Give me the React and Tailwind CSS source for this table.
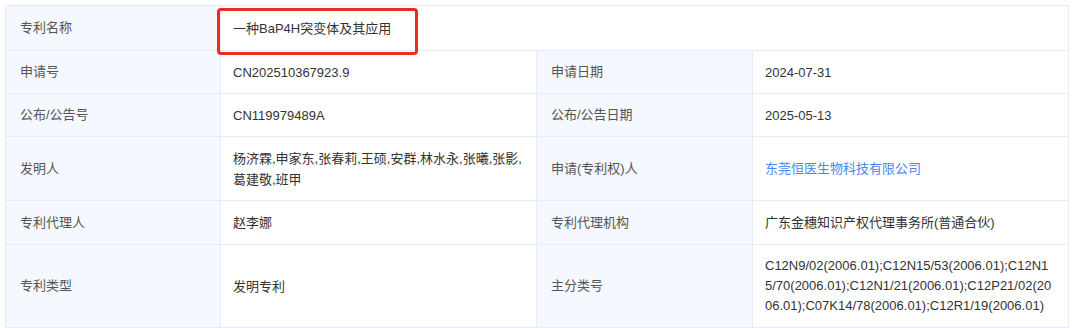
import React from 'react';

const font = { fontFamily: '"Liberation Sans", Arial, "Noto Sans CJK SC", sans-serif' };

function Label({ children }) {
  return (
    <td className="border border-[#e6ebf5] bg-[#f5f8fe] pl-[14px] text-[13px] text-[#555]">
      {children}
    </td>
  );
}

function Value({ children, colSpan, className = '' }) {
  return (
    <td colSpan={colSpan} className={`border border-[#e6ebf5] bg-white pl-[12px] pr-[8px] text-[13px] leading-[21px] text-[#333] ${className}`}>
      {children}
    </td>
  );
}

export default function App() {
  return (
    <div className="min-h-[328px] bg-white pl-[5px] pt-[5px]" style={font}>
      <table className="w-[1063px] table-fixed border-collapse">
        <colgroup>
          <col className="w-[215px]" />
          <col className="w-[316px]" />
          <col className="w-[216px]" />
          <col className="w-[316px]" />
        </colgroup>
        <tbody>
          <tr className="h-[45px]">
            <Label>专利名称</Label>
            <Value colSpan={3} className="relative">
              一种BaP4H突变体及其应用
              {/* 标注框 */}
              <div className="pointer-events-none absolute left-[-4px] top-[2px] h-[47px] w-[201px] rounded-[4px] border-[3px] border-[#ee2a24]" />
            </Value>
          </tr>
          <tr className="h-[43px]">
            <Label>申请号</Label>
            <Value>CN202510367923.9</Value>
            <Label>申请日期</Label>
            <Value>2024-07-31</Value>
          </tr>
          <tr className="h-[43px]">
            <Label>公布/公告号</Label>
            <Value>CN119979489A</Value>
            <Label>公布/公告日期</Label>
            <Value>2025-05-13</Value>
          </tr>
          <tr className="h-[64px]">
            <Label>发明人</Label>
            <Value>杨济霖,申家东,张春莉,王硕,安群,林水永,张曦,张影,葛建敬,班甲</Value>
            <Label>申请(专利权)人</Label>
            <Value>
              <span className="text-[#4a86f7]">东莞恒医生物科技有限公司</span>
            </Value>
          </tr>
          <tr className="h-[44px]">
            <Label>专利代理人</Label>
            <Value>赵李娜</Value>
            <Label>专利代理机构</Label>
            <Value>广东金穗知识产权代理事务所(普通合伙)</Value>
          </tr>
          <tr className="h-[83px]">
            <Label>专利类型</Label>
            <Value>发明专利</Value>
            <Label>主分类号</Label>
            <Value>
              <div className="w-[288px] break-all leading-[20px]">
                C12N9/02(2006.01);C12N15/53(2006.01);C12N15/70(2006.01);C12N1/21(2006.01);C12P21/02(2006.01);C07K14/78(2006.01);C12R1/19(2006.01)
              </div>
            </Value>
          </tr>
        </tbody>
      </table>
    </div>
  );
}
